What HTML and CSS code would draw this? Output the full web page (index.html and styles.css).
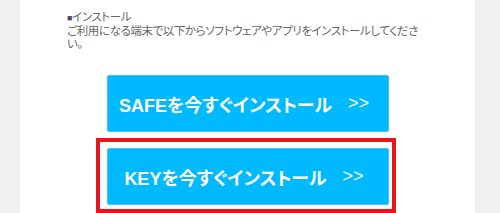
FILE: index.html
```html
<!DOCTYPE html>
<html lang="ja">
<head>
  <meta charset="UTF-8">
  <meta name="viewport" content="width=device-width, initial-scale=1.0">
  <title>インストール</title>
  <link rel="stylesheet" href="styles.css">
</head>
<body>
  <div class="panel">
    <div class="install-info">
      <p class="install-title"><span class="mark">■</span>インストール</p>
      <p class="install-text">ご利用になる端末で以下からソフトウェアやアプリをインストールしてください。</p>
    </div>

    <div class="install-list">
      <div class="install-item">
        <a class="install-btn" href="#">SAFEを今すぐインストール<span class="arrow">&gt;&gt;</span></a>
      </div>
      <div class="install-item highlight">
        <a class="install-btn" href="#">KEYを今すぐインストール<span class="arrow">&gt;&gt;</span></a>
      </div>
    </div>
  </div>
</body>
</html>
```

FILE: styles.css
```css
/* 基础样式 */
* {
  margin: 0;
  padding: 0;
  box-sizing: border-box;
}

body {
  background-color: #f1f1f1;
  font-family: "Liberation Sans", "Noto Sans CJK JP", sans-serif;
  color: #666;
}

.panel {
  width: 455px;
  height: 213px;
  margin-left: 20px;
  background: #fff;
  overflow: hidden;
}

.install-info {
  width: 356px;
  margin-left: 47px;
  padding-top: 11px;
  font-size: 11.5px;
  line-height: 13px;
  letter-spacing: -0.4px;
  font-feature-settings: "palt";
}

.mark {
  color: #5a4a6a;
  font-size: 9px;
}

.install-list {
  display: flex;
  flex-direction: column;
  align-items: flex-start;
  margin-top: 24px;
}

.install-item {
  margin-left: 87px;
}

.install-item.highlight {
  margin-top: 6px;
  margin-left: 76px;
  border: 4px solid #e8141e;
  padding: 6px 3px 4px 7px;
}

.install-btn {
  display: flex;
  justify-content: center;
  align-items: center;
  width: 282px;
  height: 57px;
  padding-right: 8px;
  background-color: #00b9ff;
  border: 1px solid #3cc8ff;
  border-radius: 2px;
  color: #fff;
  font-size: 18px;
  font-weight: bold;
  font-feature-settings: "palt";
  text-decoration: none;
}

.arrow {
  font-weight: normal;
  margin-left: 16px;
}
```
